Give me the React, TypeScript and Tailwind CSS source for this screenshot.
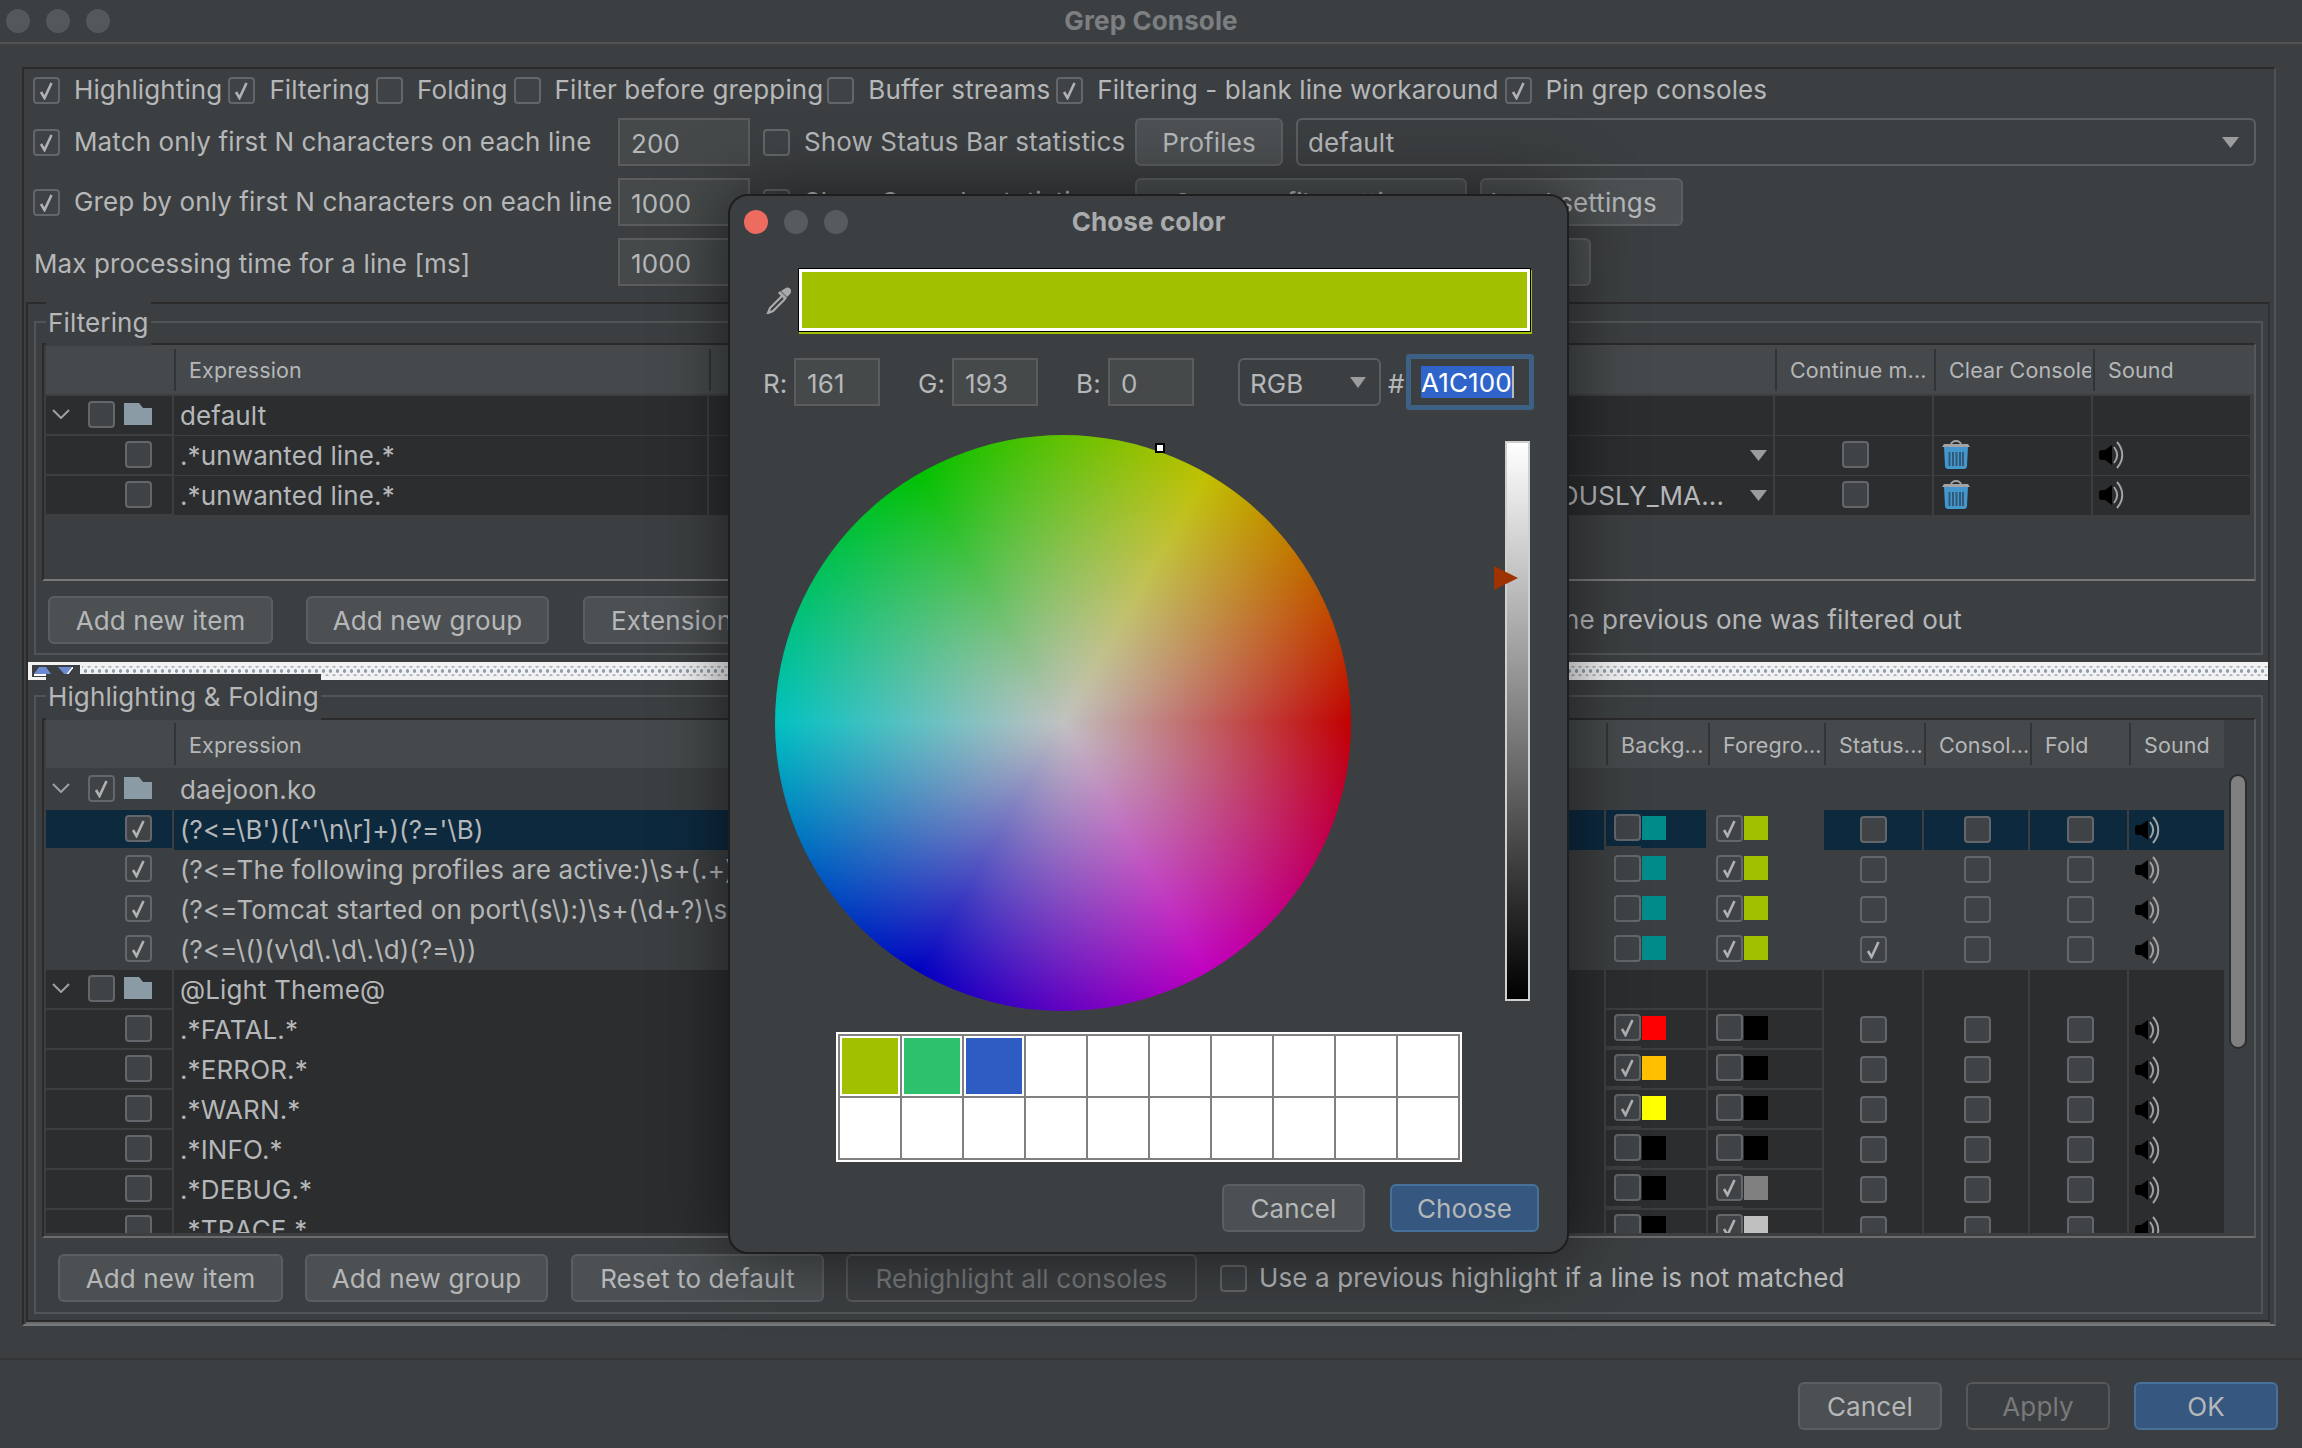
import type { ReactNode } from 'react';

type Tone = 'plain' | 'dark' | 'selected';

type ColorCell = { on: boolean; color: string };

type HighlightRow = {
  expr: string;
  on: boolean;
  group?: boolean;
  tone: Tone;
  bg?: ColorCell;
  fg?: ColorCell;
  status?: boolean;
};

const highlightRows: HighlightRow[] = [
  { expr: 'daejoon.ko', on: true, group: true, tone: 'plain' },
  { expr: "(?<=\\B')([^'\\n\\r]+)(?='\\B)", on: true, tone: 'selected', bg: { on: false, color: '#008b8b' }, fg: { on: true, color: '#a1c100' } },
  { expr: '(?<=The following profiles are active:)\\s+(.+)', on: true, tone: 'plain', bg: { on: false, color: '#008b8b' }, fg: { on: true, color: '#a1c100' } },
  { expr: '(?<=Tomcat started on port\\(s\\):)\\s+(\\d+?)\\s+.*', on: true, tone: 'plain', bg: { on: false, color: '#008b8b' }, fg: { on: true, color: '#a1c100' } },
  { expr: '(?<=\\()(v\\d\\.\\d\\.\\d)(?=\\))', on: true, tone: 'plain', bg: { on: false, color: '#008b8b' }, fg: { on: true, color: '#a1c100' }, status: true },
  { expr: '@Light Theme@', on: false, group: true, tone: 'dark' },
  { expr: '.*FATAL.*', on: false, tone: 'dark', bg: { on: true, color: '#ff0000' }, fg: { on: false, color: '#000000' } },
  { expr: '.*ERROR.*', on: false, tone: 'dark', bg: { on: true, color: '#ffc000' }, fg: { on: false, color: '#000000' } },
  { expr: '.*WARN.*', on: false, tone: 'dark', bg: { on: true, color: '#ffff00' }, fg: { on: false, color: '#000000' } },
  { expr: '.*INFO.*', on: false, tone: 'dark', bg: { on: false, color: '#000000' }, fg: { on: false, color: '#000000' } },
  { expr: '.*DEBUG.*', on: false, tone: 'dark', bg: { on: false, color: '#000000' }, fg: { on: true, color: '#808080' } },
  { expr: '.*TRACE.*', on: false, tone: 'dark', bg: { on: false, color: '#000000' }, fg: { on: true, color: '#c0c0c0' } },
];

const toneClass: Record<Tone, string> = {
  plain: 'bg-[#3c3f41]',
  dark: 'bg-[#2b2d2f]',
  selected: 'bg-[#0d293e]',
};

function Check({ on = false }: { on?: boolean }) {
  return (
    <span className="flex h-[27px] w-[27px] shrink-0 items-center justify-center rounded-[4px] border-2 border-[#63666a] bg-[#3f4345]">
      {on ? (
        <svg width="15" height="19" viewBox="0 0 15 19" fill="none">
          <path d="M2 11l3.5 6L12.5 2" stroke="#afb1b3" strokeWidth="2.6" />
        </svg>
      ) : null}
    </span>
  );
}

function Opt({ on, label, gap = 'gap-[14px]' }: { on?: boolean; label: string; gap?: string }) {
  return (
    <label className={`flex items-center whitespace-nowrap ${gap}`}>
      <Check on={on} />
      <span className="pb-[2px]">{label}</span>
    </label>
  );
}

function Btn({
  children,
  className = '',
  tone = 'default',
}: {
  children: ReactNode;
  className?: string;
  tone?: 'default' | 'blue' | 'off';
}) {
  const look =
    tone === 'blue'
      ? 'border-[#47709a] bg-[#365880]'
      : tone === 'off'
        ? 'border-[#56585a] bg-[#3c3f41] text-[#77797b]'
        : 'border-[#5c5f61] bg-[#4c5052]';
  return (
    <div className={`flex h-[48px] shrink-0 items-center justify-center overflow-hidden whitespace-nowrap rounded-[6px] border-2 pt-[1px] ${look} ${className}`}>
      {children}
    </div>
  );
}

function Field({ value, className = '' }: { value: string; className?: string }) {
  return (
    <div className={`flex h-[48px] shrink-0 items-center border-2 border-[#5a5c5e] bg-[#45494a] pl-[11px] pt-[2px] ${className}`}>
      {value}
    </div>
  );
}

function Arrow({ w = 17, h = 11 }: { w?: number; h?: number }) {
  return (
    <svg width={w} height={h} viewBox="0 0 17 11" className="shrink-0" preserveAspectRatio="none">
      <polygon points="0,0 17,0 8.5,11" fill="#9a9c9e" />
    </svg>
  );
}

function Chevron() {
  return (
    <svg width="18" height="10" viewBox="0 0 18 10" fill="none" className="shrink-0">
      <path d="M1 1l8 8 8-8" stroke="#9da0a2" strokeWidth="2" />
    </svg>
  );
}

function Folder() {
  return (
    <svg width="28" height="22" viewBox="0 0 28 22" className="shrink-0">
      <path d="M0 0H15L19 5H28V22H0Z" fill="#8b9ba6" />
    </svg>
  );
}

function Trash() {
  return (
    <svg width="28" height="31" viewBox="0 0 28 31" fill="none">
      <path d="M9 6C9 .8 19 .8 19 6" stroke="#a0a2a4" strokeWidth="2" />
      <path d="M0 8l2-3h24l2 3Z" fill="#a0a2a4" />
      <path d="M2 8h24l-1 19c0 2-1.500 3-3 3H6c-1.500 0-3-1-3-3Z" fill="#4397cc" />
      <path d="M7.500 13v14M11 13v14M14.500 13v14M18 13v14M21 13v14" stroke="#2f5b78" strokeWidth="2" />
    </svg>
  );
}

function Sound() {
  return (
    <svg width="27" height="28" viewBox="0 0 27 28" fill="none">
      <path d="M0 12Q0 9 3 9H6L13 4V24L6 19H3Q0 19 0 16Z" fill="#000000" />
      <path d="M15 6C19 11 19 17 15 22" stroke="#a0a2a4" strokeWidth="2" />
      <path d="M18 1C25 9 25 19 18 27" stroke="#a0a2a4" strokeWidth="2" />
    </svg>
  );
}

function GroupBox({ title, className = '', children }: { title: string; className?: string; children: ReactNode }) {
  return (
    <section className={`relative mx-[6px] mr-[5px] border-2 border-[#525557] ${className}`}>
      <span className="absolute left-[10px] top-[-23px] bg-[#3c3f41] px-[2px] leading-[46px]">{title}</span>
      {children}
    </section>
  );
}

function HeadCell({ label, className = '' }: { label?: string; className?: string }) {
  return (
    <div className={`flex h-[42px] items-center overflow-hidden whitespace-nowrap border-l-2 border-[#323436] pl-[13px] pt-[2px] ${className}`}>
      {label}
    </div>
  );
}

function TreeCell({ row, tone }: { row: { on: boolean; group?: boolean }; tone: Tone }) {
  return (
    <div className={`flex h-[38px] items-center pb-[2px] ${toneClass[tone]}`}>
      {row.group ? (
        <>
          <span className="ml-[6px] mr-[18px]">
            <Chevron />
          </span>
          <Check on={row.on} />
          <span className="ml-[9px]">
            <Folder />
          </span>
        </>
      ) : (
        <span className="ml-[79px]">
          <Check on={row.on} />
        </span>
      )}
    </div>
  );
}

function FilterRow({ expr, action }: { expr: string; action: string }) {
  return (
    <div className="mb-[2px] grid h-[38px] grid-cols-[126px_533px_1064px_157px_157px_157px] gap-x-[2px]">
      <TreeCell row={{ on: false }} tone="dark" />
      <div className="flex items-center bg-[#2b2d2f] pl-[6px]">{expr}</div>
      <div className="flex items-center justify-end gap-[26px] bg-[#2b2d2f] pr-[6px]">
        <span>{action}</span>
        <Arrow />
      </div>
      <div className="flex items-center justify-center bg-[#2b2d2f] pb-[2px] pl-[3px]">
        <Check />
      </div>
      <div className="flex items-center bg-[#2b2d2f] pb-[3px] pl-[8px]">
        <Trash />
      </div>
      <div className="flex items-center bg-[#2b2d2f] pb-[2px] pl-[6px]">
        <Sound />
      </div>
    </div>
  );
}

function ColorCellView({ cell, tone }: { cell?: ColorCell; tone: Tone }) {
  return (
    <div className={`flex h-[38px] items-center ${toneClass[tone]}`}>
      {cell ? (
        <>
          <span className={`flex h-full w-[35px] items-center justify-end pb-[2px] ${tone === 'plain' ? '' : 'border-b-2 border-[#3c3f41]'}`}>
            <Check on={cell.on} />
          </span>
          <span className="mb-[2px] ml-[1px] h-[24px] w-[24px]" style={{ backgroundColor: cell.color }} />
        </>
      ) : null}
    </div>
  );
}

function CenterCheck({ show, on, tone, className = '' }: { show: boolean; on?: boolean; tone: Tone; className?: string }) {
  return (
    <div className={`flex items-center pb-[2px] ${toneClass[tone]} ${className}`}>{show ? <Check on={on} /> : null}</div>
  );
}

function HighlightRowView({ row }: { row: HighlightRow }) {
  const cols = !row.group;
  return (
    <div className="mb-[2px] grid h-[38px] grid-cols-[126px_1430px_100px_114px_98px_104px_97px_95px] gap-x-[2px]">
      <TreeCell row={row} tone={row.tone} />
      <div className={`flex items-center whitespace-nowrap pb-[2px] pl-[6px] ${toneClass[row.tone]}`}>{row.expr}</div>
      <ColorCellView cell={row.bg} tone={row.tone} />
      <ColorCellView cell={row.fg} tone={row.tone === 'selected' ? 'plain' : row.tone} />
      <CenterCheck show={cols} on={row.status} tone={row.tone} className="pl-[36px]" />
      <CenterCheck show={cols} tone={row.tone} className="pl-[40px]" />
      <CenterCheck show={cols} tone={row.tone} className="pl-[37px]" />
      <div className={`flex items-center pb-[2px] pl-[6px] ${toneClass[row.tone]}`}>{cols ? <Sound /> : null}</div>
    </div>
  );
}

function ColorDialog() {
  const used = ['#a1c100', '#2ec16d', '#2f5cc2'];
  return (
    <div className="absolute left-[728px] top-[194px] flex h-[1060px] w-[841px] flex-col rounded-[20px] border-2 border-[#1d1e1f] bg-[#3c3f41] shadow-[0_0_70px_rgba(0,0,0,0.55)]">
      <div className="grid h-[52px] shrink-0 grid-cols-[1fr_auto_1fr] items-center">
        <div className="flex gap-[16px] pl-[14px]">
          <span className="h-[24px] w-[24px] rounded-full bg-[#ee6b60]" />
          <span className="h-[24px] w-[24px] rounded-full bg-[#585b5d]" />
          <span className="h-[24px] w-[24px] rounded-full bg-[#585b5d]" />
        </div>
        <div className="pb-[2px] font-bold text-[#a9abad]">Chose color</div>
        <div />
      </div>

      <div className="mt-[20px] flex items-center pl-[36px]">
        <svg width="26" height="28" viewBox="0 0 26 28" fill="none" className="mr-[6px]">
          <path d="M15 5l6 6 3-3c1.500-2 1.500-4 0-5.500s-3.500-1.500-5 0Z" fill="#a8aaac" />
          <path d="M13 6l7 7" stroke="#a8aaac" strokeWidth="3" />
          <path d="M16 10L4 22l-2 5 5-2L19 13" stroke="#a8aaac" strokeWidth="2.200" />
        </svg>
        <div className="h-[64px] w-[733px] border border-black bg-white p-[3px] shadow-[1px_2px_0_#a1c100]">
          <div className="h-full bg-[#a1c100]" />
        </div>
      </div>

      <div className="mt-[22px] flex h-[56px] items-center pl-[33px]">
        <span className="w-[31px] pt-[2px]">R:</span>
        <Field value="161" className="w-[86px]" />
        <span className="ml-[38px] w-[34px] pt-[2px]">G:</span>
        <Field value="193" className="w-[86px]" />
        <span className="ml-[38px] w-[32px] pt-[2px]">B:</span>
        <Field value="0" className="w-[86px]" />
        <div className="ml-[44px] flex h-[48px] w-[143px] items-center justify-between rounded-[6px] border-2 border-[#5c5f61] pl-[10px] pr-[13px]">
          <span className="pt-[2px]">RGB</span>
          <Arrow w={16} h={11} />
        </div>
        <span className="ml-[7px] w-[18px] pt-[2px]">#</span>
        <div className="flex h-[56px] w-[128px] items-center rounded-[3px] border-[5px] border-[#3d6185] pl-[10px]">
          <span className="bg-[#2f65ca] pt-[1px] leading-[31px] text-white">A1C100</span>
          <span className="h-[32px] w-[2px] bg-[#bbbbbb]" />
        </div>
      </div>

      <div className="mt-[25px] flex pl-[45px]">
        <div className="relative h-[576px] w-[576px] shrink-0 rounded-full bg-[conic-gradient(#61c100_0deg,#c1c100_30deg,#c10000_90deg,#c100c1_150deg,#0000c1_210deg,#00c1c1_270deg,#00c100_330deg,#61c100_360deg)]">
          <div className="absolute inset-0 rounded-full bg-[radial-gradient(circle_closest-side,#c1c1c1,#c1c1c100)]" />
          <div className="absolute left-[380px] top-[8px] h-[10px] w-[10px] border-2 border-black bg-white" />
        </div>
        <div className="relative ml-[154px] mt-[6px] h-[560px] w-[25px] border-2 border-[#cfcfcf] bg-[linear-gradient(#ffffff,#000000)]">
          <svg width="24" height="24" viewBox="0 0 24 24" className="absolute left-[-13px] top-[123px]">
            <polygon points="0,0 24,12 0,24" fill="#9c3300" />
          </svg>
        </div>
      </div>

      <div className="ml-[106px] mt-[21px] grid h-[130px] w-[626px] grid-cols-10 gap-[2px] border-2 border-white bg-[#808080] p-[2px]">
        {Array.from({ length: 20 }, (_, i) => (
          <div key={i} className="bg-white p-[2px]">
            {used[i] ? <div className="h-full" style={{ backgroundColor: used[i] }} /> : null}
          </div>
        ))}
      </div>

      <div className="mt-[22px] flex justify-end gap-[25px] pr-[28px]">
        <Btn className="w-[143px]">Cancel</Btn>
        <Btn className="w-[149px]" tone="blue">
          Choose
        </Btn>
      </div>
    </div>
  );
}

export default function App() {
  return (
    <div className="relative flex h-[1448px] w-[2302px] flex-col overflow-hidden bg-[#3c3f41] font-['Inter',sans-serif] text-[26px] tracking-[0.12px] text-[#b5b7b9]">
      <div className="grid h-[44px] shrink-0 grid-cols-[1fr_auto_1fr] items-center border-b-2 border-[#505254]">
        <div className="flex gap-[16px] pl-[6px]">
          <span className="h-[24px] w-[24px] rounded-full bg-[#55585a]" />
          <span className="h-[24px] w-[24px] rounded-full bg-[#55585a]" />
          <span className="h-[24px] w-[24px] rounded-full bg-[#55585a]" />
        </div>
        <div className="pb-[2px] font-bold text-[#7c7f81]">Grep Console</div>
        <div />
      </div>

      <main className="ml-[22px] mr-[26px] mt-[23px] border-2 border-[#2b2b2b] border-b-[#77797b] border-r-[#4f5153] pb-[2px]">
        <div className="pl-[9px] pt-[8px]">
          <div className="flex h-[27px] items-center">
            <Opt on label="Highlighting" />
            <span className="ml-[6px]"><Opt on label="Filtering" /></span>
            <span className="ml-[6px]"><Opt label="Folding" /></span>
            <span className="ml-[6px]"><Opt label="Filter before grepping" /></span>
            <span className="ml-[4px]"><Opt label="Buffer streams" /></span>
            <span className="ml-[6px]"><Opt on label="Filtering - blank line workaround" /></span>
            <span className="ml-[6px]"><Opt on label="Pin grep consoles" /></span>
          </div>

          <div className="mt-[14px] flex items-center">
            <div className="w-[585px]">
              <Opt on label="Match only first N characters on each line" />
            </div>
            <Field value="200" className="w-[132px]" />
            <div className="ml-[13px] w-[372px]">
              <Opt label="Show Status Bar statistics" />
            </div>
            <Btn className="w-[148px]">Profiles</Btn>
            <div className="ml-[13px] flex h-[48px] w-[960px] items-center justify-between rounded-[6px] border-2 border-[#5c5f61] pl-[10px] pr-[15px]">
              <span className="pt-[1px]">default</span>
              <Arrow />
            </div>
          </div>

          <div className="mt-[12px] flex items-center">
            <div className="w-[585px]">
              <Opt on label="Grep by only first N characters on each line" />
            </div>
            <Field value="1000" className="w-[132px]" />
            <div className="ml-[13px] w-[372px]">
              <Opt label="Show Console statistics" />
            </div>
            <Btn className="w-[332px]">Copy profile settings</Btn>
            <Btn className="ml-[13px] w-[203px] pr-[16px]">Load settings</Btn>
          </div>

          <div className="mt-[12px] flex items-center">
            <div className="w-[585px] pl-[1px] pt-[2px]">Max processing time for a line [ms]</div>
            <Field value="1000" className="w-[132px]" />
            <Btn className="ml-[385px] w-[456px]">Donate</Btn>
          </div>
        </div>

        <div className="ml-[2px] mr-[4px] mt-[16px] border-2 border-[#2b2b2b] border-r-[#303234] pb-[6px] pt-[17px] shadow-[0_2px_0_#6a6c6e]">
          <GroupBox title="Filtering" className="h-[334px]">
            <div className="ml-[6px] mr-[5px] mt-[20px] h-[238px] border-2 border-[#2b2b2b] border-b-[#77797b] border-r-[#55585a] pl-[2px]">
              <div className="mb-[2px] grid h-[49px] grid-cols-[126px_533px_1064px_157px_157px_157px] items-center gap-x-[2px] bg-[#45494b] text-[21.5px]">
                <div />
                <HeadCell label="Expression" />
                <HeadCell />
                <HeadCell label="Continue m..." />
                <HeadCell label="Clear Console" />
                <HeadCell label="Sound" />
              </div>
              <div className="mb-[2px] grid h-[38px] grid-cols-[126px_533px_1064px_157px_157px_157px] gap-x-[2px]">
                <TreeCell row={{ on: false, group: true }} tone="dark" />
                <div className="flex items-center bg-[#2b2d2f] pl-[6px]">default</div>
                <div className="bg-[#2b2d2f]" />
                <div className="bg-[#2b2d2f]" />
                <div className="bg-[#2b2d2f]" />
                <div className="bg-[#2b2d2f]" />
              </div>
              <FilterRow expr=".*unwanted line.*" action="" />
              <FilterRow expr=".*unwanted line.*" action="RULE_PREVIOUSLY_MA..." />
            </div>
            <div className="mt-[15px] flex items-center pl-[12px]">
              <Btn className="w-[225px]">Add new item</Btn>
              <Btn className="ml-[33px] w-[243px]">Add new group</Btn>
              <Btn className="ml-[34px] w-[191px]">Extensions</Btn>
              <span className="ml-auto mr-[299px] whitespace-nowrap pb-[2px]">Do not filter if the previous one was filtered out</span>
            </div>
          </GroupBox>

          <div className="mt-[7px] flex h-[18px] items-center bg-[#f2f2f2] pl-[4px]">
            <div className="flex h-[12px] w-[48px] shrink-0 items-center gap-[7px] bg-[#3c3f41] pl-[2px]">
              <svg width="17" height="9" viewBox="0 0 17 9" className="shrink-0"><polygon points="5,0 12,0 17,7 0,7" fill="#6c8ad0" /><rect y="7" width="17" height="2" fill="#ffffff" /></svg>
              <svg width="15" height="9" viewBox="0 0 15 9" className="shrink-0"><polygon points="0,0 15,0 8,9" fill="#6c8ad0" /><path d="M15 0L8 9" stroke="#ffffff" strokeWidth="1.500" /></svg>
            </div>
            <div className="ml-[2px] h-[10px] flex-1 bg-[radial-gradient(#8f9eae_1.2px,transparent_1.6px),radial-gradient(#a9b0b8_1.2px,transparent_1.6px)] bg-[length:7px_10px] bg-[position:0_0,3.5px_5px]" />
          </div>

          <GroupBox title="Highlighting &amp; Folding" className="mt-[15px]">
            <div className="ml-[6px] mr-[5px] mt-[21px] flex border-2 border-[#2b2b2b] border-b-[#6a6c6e] border-r-[#55585a] pb-[3px] pl-[2px]">
              <div className="w-[2178px] shrink-0">
                <div className="mb-[2px] grid h-[48px] grid-cols-[126px_1430px_100px_114px_98px_104px_97px_95px] items-center gap-x-[2px] bg-[#45494b] text-[21.5px]">
                  <div />
                  <HeadCell label="Expression" />
                  <HeadCell label="Backg..." />
                  <HeadCell label="Foregro..." />
                  <HeadCell label="Status..." />
                  <HeadCell label="Consol..." />
                  <HeadCell label="Fold" />
                  <HeadCell label="Sound" />
                </div>
                <div className="h-[463px] overflow-hidden">
                  {highlightRows.map((row) => (
                    <HighlightRowView key={row.expr} row={row} />
                  ))}
                </div>
              </div>
              <div className="ml-[5px] mt-[54px] h-[275px] w-[18px] shrink-0 rounded-full border-2 border-[#2b2d2f] bg-[#808080]" />
            </div>
            <div className="mt-[16px] flex items-center pb-[10px] pl-[22px]">
              <Btn className="w-[225px]">Add new item</Btn>
              <Btn className="ml-[22px] w-[243px]">Add new group</Btn>
              <Btn className="ml-[23px] w-[253px]">Reset to default</Btn>
              <Btn className="ml-[22px] w-[351px]" tone="off">Rehighlight all consoles</Btn>
              <span className="ml-[23px]">
                <Opt label="Use a previous highlight if a line is not matched" gap="gap-[12px]" />
              </span>
            </div>
          </GroupBox>
        </div>
      </main>

      <div className="mt-[32px] flex flex-1 justify-end gap-[24px] border-t-2 border-[#333537] pr-[24px] pt-[22px]">
        <Btn className="w-[144px]">Cancel</Btn>
        <Btn className="w-[144px]" tone="off">Apply</Btn>
        <Btn className="w-[144px]" tone="blue">OK</Btn>
      </div>

      <ColorDialog />
    </div>
  );
}
